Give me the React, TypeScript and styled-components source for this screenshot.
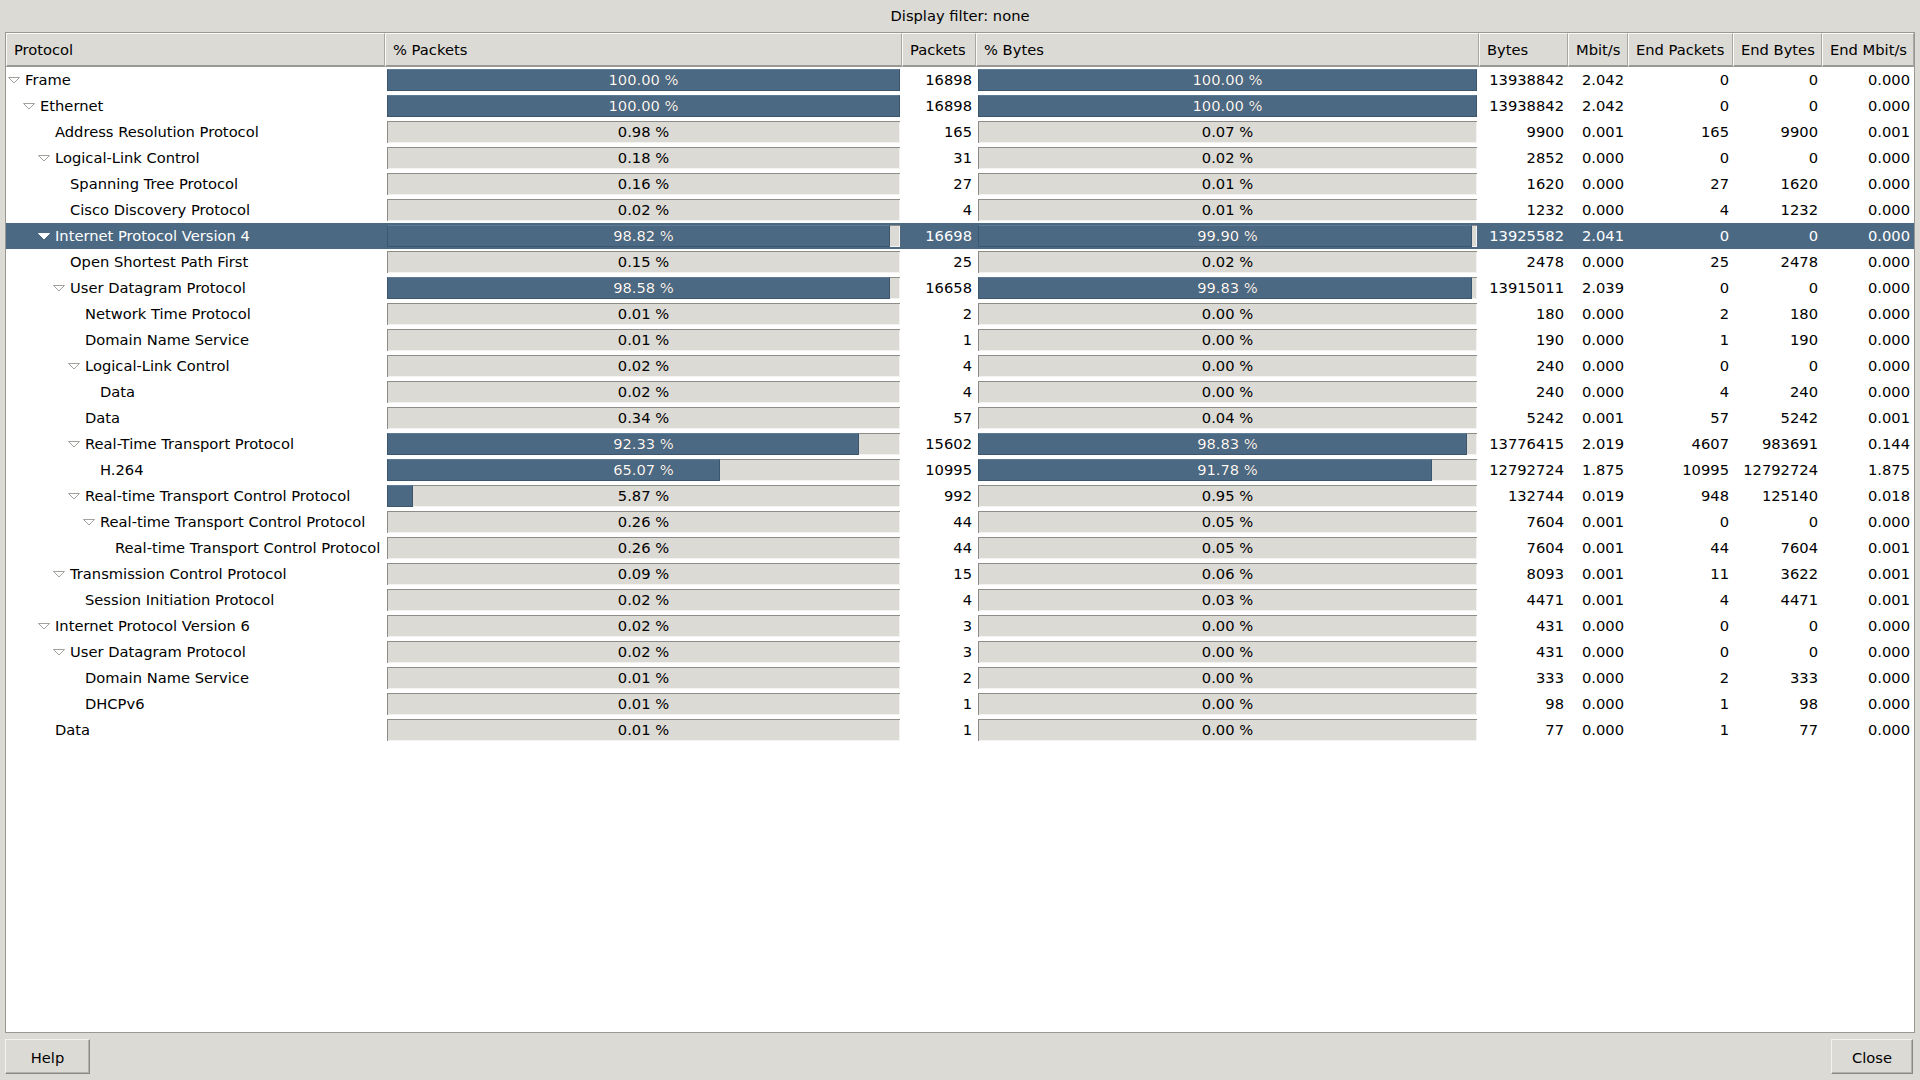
import React from "react";
import styled, { createGlobalStyle } from "styled-components";

const GlobalStyle = createGlobalStyle`
  html, body {
    margin: 0;
    padding: 0;
    background: #dcdad5;
    font-family: "DejaVu Sans", "Liberation Sans", sans-serif;
    font-size: 14.7px;
    color: #000;
  }
  #root { height: 1080px; }
`;

const COLS = "379px 517px 74px 503px 89px 60px 105px 89px 1fr";

const Window = styled.div`
  width: 1920px;
  height: 1080px;
  display: flex;
  flex-direction: column;
  background: #dcdad5;
`;

const Title = styled.div`
  height: 32px;
  display: flex;
  align-items: center;
  justify-content: center;
  padding-bottom: 2px;
  box-sizing: border-box;
`;

const Frame = styled.div`
  flex: 1;
  margin: 0 5px;
  border: 1px solid #9a9893;
  background: #fff;
  overflow: hidden;
  display: flex;
  flex-direction: column;
`;

const HeaderRow = styled.div`
  display: grid;
  grid-template-columns: ${COLS};
  height: 34px;
`;

const HeaderCell = styled.div`
  background: #dcdad5;
  border-top: 1px solid #fbfbfa;
  border-left: 1px solid #fbfbfa;
  border-right: 1px solid #a9a7a2;
  border-bottom: 2px solid #9a9893;
  box-sizing: border-box;
  display: flex;
  align-items: center;
  padding-left: 7px;
  white-space: nowrap;
  overflow: hidden;
`;

const Row = styled.div<{ $selected?: boolean }>`
  display: grid;
  grid-template-columns: ${COLS};
  height: 26px;
  background: ${(p) => (p.$selected ? "#4b6983" : "transparent")};
  color: ${(p) => (p.$selected ? "#fff" : "#000")};
`;

const NameCell = styled.div<{ $level: number }>`
  display: flex;
  align-items: center;
  padding-left: ${(p) => 1 + p.$level * 15}px;
  padding-bottom: 1px;
  box-sizing: border-box;
  white-space: nowrap;
  overflow: hidden;
`;

const Expander = styled.span`
  width: 14px;
  height: 14px;
  margin-right: 4px;
  flex: none;
  display: flex;
  align-items: center;
  justify-content: center;
`;

const NumCell = styled.div`
  display: flex;
  align-items: center;
  justify-content: flex-end;
  padding-right: 4px;
  padding-bottom: 1px;
  box-sizing: border-box;
  white-space: nowrap;
`;

const BarCell = styled.div`
  padding: 2px;
  box-sizing: border-box;
  display: flex;
`;

const Trough = styled.div`
  flex: 1;
  display: grid;
  background: #dcdad5;
  box-shadow: inset 1px 1px 0 #8e8c88, inset -1px -1px 0 #f4f3f1;
  color: #000;
`;

const Fill = styled.div`
  grid-area: 1 / 1;
  justify-self: start;
  height: 100%;
  box-sizing: border-box;
  background: #4b6983;
  border: 1px solid #3b566d;
  border-top-color: #5c7c98;
`;

const BarLabel = styled.div<{ $light?: boolean }>`
  grid-area: 1 / 1;
  display: flex;
  align-items: center;
  justify-content: center;
  padding-bottom: 1px;
  color: ${(p) => (p.$light ? "#fff" : "#000")};
  white-space: nowrap;
`;

const ButtonBar = styled.div`
  display: flex;
  justify-content: space-between;
  padding: 6px 7px 6px 5px;
  height: 47px;
  box-sizing: border-box;
`;

const Button = styled.button<{ $w: number }>`
  width: ${(p) => p.$w}px;
  height: 35px;
  font: inherit;
  color: #000;
  background: #dcdad5;
  border: 1px solid;
  border-color: #f3f2f0 #8a8884 #8a8884 #f3f2f0;
  box-shadow: inset -1px -1px 0 #b3b1ac;
  padding: 2px 0 0 0;
`;

type R = [number, string, boolean, number, number, number, number, string, number, number, string];

const rows: R[] = [
  [0, "Frame", true, 100.0, 16898, 100.0, 13938842, "2.042", 0, 0, "0.000"],
  [1, "Ethernet", true, 100.0, 16898, 100.0, 13938842, "2.042", 0, 0, "0.000"],
  [2, "Address Resolution Protocol", false, 0.98, 165, 0.07, 9900, "0.001", 165, 9900, "0.001"],
  [2, "Logical-Link Control", true, 0.18, 31, 0.02, 2852, "0.000", 0, 0, "0.000"],
  [3, "Spanning Tree Protocol", false, 0.16, 27, 0.01, 1620, "0.000", 27, 1620, "0.000"],
  [3, "Cisco Discovery Protocol", false, 0.02, 4, 0.01, 1232, "0.000", 4, 1232, "0.000"],
  [2, "Internet Protocol Version 4", true, 98.82, 16698, 99.9, 13925582, "2.041", 0, 0, "0.000"],
  [3, "Open Shortest Path First", false, 0.15, 25, 0.02, 2478, "0.000", 25, 2478, "0.000"],
  [3, "User Datagram Protocol", true, 98.58, 16658, 99.83, 13915011, "2.039", 0, 0, "0.000"],
  [4, "Network Time Protocol", false, 0.01, 2, 0.0, 180, "0.000", 2, 180, "0.000"],
  [4, "Domain Name Service", false, 0.01, 1, 0.0, 190, "0.000", 1, 190, "0.000"],
  [4, "Logical-Link Control", true, 0.02, 4, 0.0, 240, "0.000", 0, 0, "0.000"],
  [5, "Data", false, 0.02, 4, 0.0, 240, "0.000", 4, 240, "0.000"],
  [4, "Data", false, 0.34, 57, 0.04, 5242, "0.001", 57, 5242, "0.001"],
  [4, "Real-Time Transport Protocol", true, 92.33, 15602, 98.83, 13776415, "2.019", 4607, 983691, "0.144"],
  [5, "H.264", false, 65.07, 10995, 91.78, 12792724, "1.875", 10995, 12792724, "1.875"],
  [4, "Real-time Transport Control Protocol", true, 5.87, 992, 0.95, 132744, "0.019", 948, 125140, "0.018"],
  [5, "Real-time Transport Control Protocol", true, 0.26, 44, 0.05, 7604, "0.001", 0, 0, "0.000"],
  [6, "Real-time Transport Control Protocol", false, 0.26, 44, 0.05, 7604, "0.001", 44, 7604, "0.001"],
  [3, "Transmission Control Protocol", true, 0.09, 15, 0.06, 8093, "0.001", 11, 3622, "0.001"],
  [4, "Session Initiation Protocol", false, 0.02, 4, 0.03, 4471, "0.001", 4, 4471, "0.001"],
  [2, "Internet Protocol Version 6", true, 0.02, 3, 0.0, 431, "0.000", 0, 0, "0.000"],
  [3, "User Datagram Protocol", true, 0.02, 3, 0.0, 431, "0.000", 0, 0, "0.000"],
  [4, "Domain Name Service", false, 0.01, 2, 0.0, 333, "0.000", 2, 333, "0.000"],
  [4, "DHCPv6", false, 0.01, 1, 0.0, 98, "0.000", 1, 98, "0.000"],
  [2, "Data", false, 0.01, 1, 0.0, 77, "0.000", 1, 77, "0.000"],
];

const headers = [
  "Protocol",
  "% Packets",
  "Packets",
  "% Bytes",
  "Bytes",
  "Mbit/s",
  "End Packets",
  "End Bytes",
  "End Mbit/s",
];

function Triangle({ selected }: { selected: boolean }) {
  return (
    <svg width="14" height="14" viewBox="0 0 14 14">
      <polygon
        points="1.5,4.5 12.5,4.5 7,10"
        fill="#ffffff"
        stroke={selected ? "#ffffff" : "#a3a19c"}
        strokeWidth="1"
        strokeLinejoin="miter"
      />
    </svg>
  );
}

function Bar({ pct }: { pct: number }) {
  const fillPct = Math.floor(pct);
  const label = `${pct.toFixed(2)} %`;
  return (
    <BarCell>
      <Trough>
        {fillPct > 0 && <Fill style={{ width: `${fillPct}%` }} />}
        <BarLabel>{label}</BarLabel>
        <BarLabel $light style={{ clipPath: `inset(0 ${100 - fillPct}% 0 0)` }}>
          {label}
        </BarLabel>
      </Trough>
    </BarCell>
  );
}

export default function App() {
  return (
    <Window>
      <GlobalStyle />
      <Title>Display filter: none</Title>
      <Frame>
        <HeaderRow>
          {headers.map((h) => (
            <HeaderCell key={h}>{h}</HeaderCell>
          ))}
        </HeaderRow>
        {rows.map((r, i) => {
          const [level, name, expanded, pp, pk, pb, by, mb, ep, eb, em] = r;
          const selected = i === 6;
          return (
            <Row key={i} $selected={selected}>
              <NameCell $level={level}>
                <Expander>{expanded && <Triangle selected={selected} />}</Expander>
                {name}
              </NameCell>
              <Bar pct={pp} />
              <NumCell>{pk}</NumCell>
              <Bar pct={pb} />
              <NumCell>{by}</NumCell>
              <NumCell>{mb}</NumCell>
              <NumCell>{ep}</NumCell>
              <NumCell>{eb}</NumCell>
              <NumCell>{em}</NumCell>
            </Row>
          );
        })}
      </Frame>
      <ButtonBar>
        <Button $w={85}>Help</Button>
        <Button $w={82}>Close</Button>
      </ButtonBar>
    </Window>
  );
}
